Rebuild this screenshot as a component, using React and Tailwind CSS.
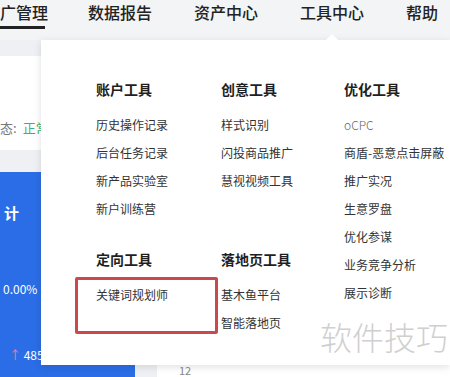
import { useState } from 'react'

const NAV = ['广管理', '数据报告', '资产中心', '工具中心', '帮助']

const GROUPS = [
  { title: '账户工具', items: ['历史操作记录', '后台任务记录', '新产品实验室', '新户训练营'], cls: '' },
  { title: '创意工具', items: ['样式识别', '闪投商品推广', '慧视视频工具'], cls: '' },
  { title: '优化工具', items: ['oCPC', '商盾-恶意点击屏蔽', '推广实况', '生意罗盘', '优化参谋', '业务竞争分析', '展示诊断'], cls: 'row-span-2' },
  { title: '定向工具', items: ['关键词规划师'], cls: '' },
  { title: '落地页工具', items: ['基木鱼平台', '智能落地页'], cls: '' },
]

const font = { fontFamily: '"Noto Sans CJK SC", "Noto Sans", sans-serif' }

function ToolGroup({ title, items, cls }) {
  return (
    <div className={cls}>
      <h4 className="text-[14px] leading-[20px] font-bold text-[#1f1f1f] mb-3">{title}</h4>
      {items.map(item => (
        <p
          key={item}
          className={`text-[12px] leading-[28px] whitespace-nowrap ${item === 'oCPC' ? 'text-[#666] font-light' : 'text-[#333]'}`}
        >
          {item}
        </p>
      ))}
    </div>
  )
}

export default function App() {
  const [active] = useState(0)

  return (
    <div className="relative w-[450px] h-[377px] overflow-hidden bg-[#eef0f3]" style={font}>

      {/* Top nav */}
      <div className="h-[40px] bg-[#f3f4f6] flex gap-[42px]">
        {NAV.map((label, i) => (
          <div key={label} className={`relative shrink-0 h-full ${i === 1 ? '-ml-[2px]' : ''}`}>
            <span className="block text-[16px] leading-[24px] font-medium text-[#222] whitespace-nowrap">{label}</span>
            {i === active && <div className="absolute left-0 right-[3px] top-[26px] h-[3px] bg-[#222]" />}
          </div>
        ))}
      </div>

      {/* Page underneath */}
      <div className="flex h-[337px]">
        <div className="w-[135px] flex flex-col">
          <div className="h-[16px]" />
          <div className="h-[94px] bg-white flex items-end pb-[12px]">
            <span className="text-[13px] leading-[20px] text-[#777]">态:</span>
            <span className="text-[13px] leading-[20px] text-[#3bb27a] ml-[6px]">正常</span>
          </div>
          <div className="h-[22px]" />
          <div className="flex-1 bg-[#2b6de6] flex flex-col text-white">
            <span className="text-[15px] leading-[20px] font-bold ml-[4px] mt-[31px]">计</span>
            <span className="text-[12px] leading-[16px] ml-[3px] mt-[58px]">0.00%</span>
            <span className="text-[12px] leading-[16px] ml-[9px] mt-[50px]">
              <span className="text-[#f07ab0]">↑</span> 485
            </span>
          </div>
        </div>
        <div className="w-[22px]" />
        <div className="flex-1 bg-white flex items-end">
          <span className="text-[11px] leading-[12px] text-[#888] ml-[22px] mb-[1px]">12</span>
        </div>
      </div>

      {/* Dropdown menu */}
      <div className="absolute left-[41px] top-[40px] right-0 h-[325px] bg-white shadow-[0_2px_8px_rgba(0,0,0,0.12)]">
        <div className="grid grid-cols-[125px_123px_1fr] gap-y-[26px] pl-[55px] pt-[39px]">
          {GROUPS.map(g => <ToolGroup key={g.title} {...g} />)}
        </div>
        <div className="absolute left-[34px] top-[237px] w-[143px] h-[57px] border-[3px] border-[#c9494d] rounded-[2px]" />
      </div>

      {/* Caret */}
      <div className="absolute left-[326px] top-[34px] w-0 h-0 border-l-[6px] border-r-[6px] border-b-[6px] border-l-transparent border-r-transparent border-b-white" />

      {/* Watermark */}
      <div className="absolute left-[320px] top-[316px] text-[32px] leading-[40px] font-light text-[#cfcfcf]">软件技巧</div>
    </div>
  )
}
